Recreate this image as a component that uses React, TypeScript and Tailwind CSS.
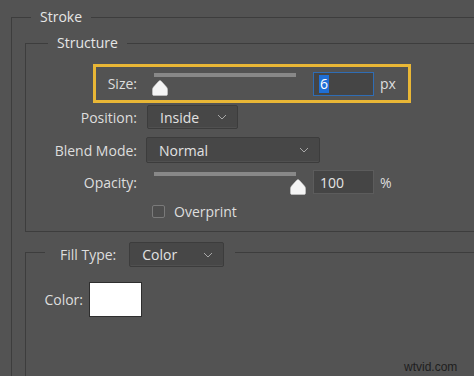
import React from "react";

const Chevron = () => (
  <svg width="10" height="6" viewBox="0 0 10 6" className="shrink-0">
    <path d="M1 1 L5 5 L9 1" fill="none" stroke="#a8a8a8" strokeWidth="1" />
  </svg>
);

const Dropdown = ({ label, w, h }: { label: string; w: string; h: string }) => (
  <div
    className={`${w} ${h} flex items-center justify-between pl-[12px] pr-[10px] bg-[#474747] border border-[#3c3c3c] rounded-[2px] shadow-[inset_0_-1px_0_#505050] text-[#e2e2e2]`}
  >
    <span>{label}</span>
    <Chevron />
  </div>
);

const Thumb = () => (
  <svg width="16" height="16" viewBox="0 0 16 16">
    <path
      d="M8 0.5 C9 0.5 9.5 1.5 10.5 2.5 L14.5 7 C15.2 7.8 15.5 8.5 15.5 9.5 L15.5 14 C15.5 15 15 15.5 14 15.5 L2 15.5 C1 15.5 0.5 15 0.5 14 L0.5 9.5 C0.5 8.5 0.8 7.8 1.5 7 L5.5 2.5 C6.5 1.5 7 0.5 8 0.5 Z"
      fill="#f4f4f4"
      stroke="#d0d0d0"
      strokeWidth="0.5"
    />
  </svg>
);

const Slider = ({ left }: { left: number }) => (
  <div className="relative w-[142px] h-[24px] shrink-0">
    <div className="mt-[3px] h-[4px] w-full bg-[#888888]" />
    <div className="absolute top-[7px]" style={{ left }}>
      <Thumb />
    </div>
  </div>
);

export default function App() {
  return (
    <div
      className="relative w-[474px] h-[376px] overflow-hidden bg-[#535353] text-[14px] text-[#dedede]"
      style={{ fontFamily: '"Open Sans", "Noto Sans", sans-serif' }}
    >
      <div className="pt-[7px] pl-[11px]">
        <fieldset className="w-[500px] h-[420px] border border-[#3d3d3d]">
          <legend className="ml-[19px] px-[9px] h-[20px] leading-[20px] text-[#e6e6e6]">Stroke</legend>

          {/* Structure group */}
          <fieldset className="ml-[13px] mt-[6px] w-[480px] border border-[#3d3d3d] pb-[13px]">
            <legend className="ml-[22px] px-[9px] h-[20px] leading-[20px] text-[#e6e6e6]">Structure</legend>

            {/* Size row, highlighted */}
            <div className="mt-[11px] ml-[67px] w-[318px] h-[39px] border-[3px] border-[#e9b736] flex items-center">
              <div className="w-[41px] text-right">Size:</div>
              <div className="ml-[17px]">
                <Slider left={-2} />
              </div>
              <div className="ml-[17px] w-[61px] h-[24px] border border-[#2f6db5] bg-[#454545] flex items-center pl-[5px]">
                <span className="bg-[#1f6fd6] text-white leading-[18px] px-[1px]">6</span>
              </div>
              <div className="ml-[6px]">px</div>
            </div>

            {/* Position */}
            <div className="mt-[2px] flex items-center h-[24px]">
              <div className="w-[111px] text-right">Position:</div>
              <div className="ml-[10px]">
                <Dropdown label="Inside" w="w-[91px]" h="h-[24px]" />
              </div>
            </div>

            {/* Blend Mode */}
            <div className="mt-[8px] flex items-center h-[26px]">
              <div className="w-[111px] text-right">Blend Mode:</div>
              <div className="ml-[9px]">
                <Dropdown label="Normal" w="w-[174px]" h="h-[26px]" />
              </div>
            </div>

            {/* Opacity */}
            <div className="mt-[7px] flex items-center h-[24px]">
              <div className="w-[111px] text-right">Opacity:</div>
              <div className="ml-[17px]">
                <Slider left={136} />
              </div>
              <div className="ml-[17px] w-[61px] h-[24px] border border-[#5c5c5c] bg-[#454545] flex items-center pl-[6px] text-[#e4e4e4]">
                100
              </div>
              <div className="ml-[6px]">%</div>
            </div>

            {/* Overprint */}
            <div className="mt-[11px] ml-[126px] flex items-center h-[13px]">
              <div className="w-[13px] h-[13px] border border-[#7a7a7a] bg-[#4e4e4e] rounded-[2px]" />
              <div className="ml-[9px] leading-[13px]">Overprint</div>
            </div>
          </fieldset>

          {/* Fill Type group */}
          <fieldset className="ml-[13px] mt-[6px] w-[480px] h-[200px] border border-[#3d3d3d]">
            <legend className="ml-[19px] pl-[15px] pr-[11px] h-[29px] pt-[4px]">
              <div className="flex items-center h-[25px]">
                <span>Fill Type:</span>
                <div className="ml-[13px]">
                  <Dropdown label="Color" w="w-[95px]" h="h-[25px]" />
                </div>
              </div>
            </legend>

            <div className="mt-[15px] flex items-center">
              <div className="w-[57px] text-right">Color:</div>
              <div className="ml-[6px] w-[53px] h-[35px] bg-white border border-[#2e2e2e]" />
            </div>
          </fieldset>
        </fieldset>
      </div>

      <div
        className="absolute left-[404px] top-[358px] text-[12px] text-[#1e1e1e]"
        style={{ fontFamily: '"Liberation Sans", Arial, sans-serif' }}
      >
        wtvid.com
      </div>
    </div>
  );
}
